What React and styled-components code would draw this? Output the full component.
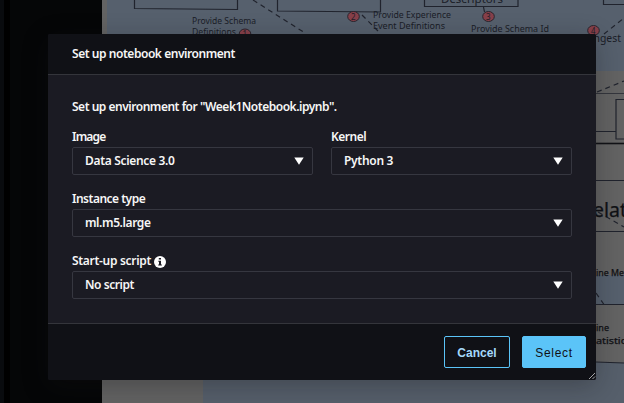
import React from "react";
import styled, { createGlobalStyle } from "styled-components";

const GlobalStyle = createGlobalStyle`
  * { box-sizing: border-box; }
  body { margin: 0; background: #050607; overflow: hidden; }
`;

const Page = styled.main`
  position: relative;
  width: 624px;
  height: 403px;
  overflow: hidden;
  font-family: "Noto Sans", sans-serif;
`;

const Sketch = styled.svg`
  display: block;
  width: 624px;
  height: 403px;
`;

const Shade = styled.div`
  position: absolute;
  left: 48px;
  top: 34px;
  width: 548px;
  height: 346px;
  box-shadow: 0 6px 24px rgba(15, 17, 20, 0.3);
`;

const Dialog = styled.section`
  position: absolute;
  left: 48px;
  top: 34px;
  width: 548px;
  height: 346px;
  display: flex;
  flex-direction: column;
  background: #1b1b23;
  border-radius: 2px;
  overflow: hidden;
  color: #f6f6f6;
`;

const Header = styled.header`
  height: 41px;
  padding: 12px 24px 0;
  background: #101116;
  border-bottom: 1px solid #34353b;
`;

const Label = styled.span`
  display: block;
  height: 16px;
  line-height: 16px;
  font-size: 12px;
  font-weight: 600;
  white-space: nowrap;
  letter-spacing: ${(p) => p.$track || 0}px;
`;

const Body = styled.div`
  flex: 1;
  padding: 24px 24px 0;
`;

const Fields = styled.div`
  display: grid;
  grid-template-columns: 241px 241px;
  column-gap: 18px;
  row-gap: 16px;
  margin-top: 14px;
`;

const Field = styled.div`
  grid-column: ${(p) => (p.$wide ? "1 / -1" : "auto")};
  height: 46px;
`;

const LabelRow = styled.div`
  display: flex;
  align-items: flex-start;
  gap: 3px;
  height: 18px;
`;

const InfoMark = styled.svg`
  margin-top: 3px;
`;

const Select = styled.div`
  display: flex;
  align-items: center;
  justify-content: space-between;
  height: 28px;
  padding: 0 8px 0 12px;
  border: 1px solid #363740;
  border-radius: 2px;
`;

const Footer = styled.footer`
  position: relative;
  display: flex;
  justify-content: flex-end;
  gap: 12px;
  height: 57px;
  padding: 12px 10px 0;
  background: #101116;
  border-top: 1px solid #34353b;
`;

const Button = styled.button`
  width: ${(p) => (p.$primary ? 64 : 66)}px;
  height: 32px;
  padding: 1px 0 0;
  border: 1px solid #5bc4f8;
  border-radius: 2px;
  background: ${(p) => (p.$primary ? "#5bc4f8" : "transparent")};
  color: ${(p) => (p.$primary ? "#101116" : "#a5d9fb")};
  font-family: "Liberation Sans", sans-serif;
  font-size: 12px;
  font-weight: ${(p) => (p.$primary ? 400 : 700)};
  letter-spacing: ${(p) => (p.$primary ? 0.7 : 0)}px;
`;

const Grip = styled.svg`
  position: absolute;
  right: 0;
  bottom: 0;
`;

const Caret = () => (
  <svg width="10" height="8" viewBox="0 0 10 8">
    <path d="M.3 .5h9.400L5 7.800z" fill="#fff" />
  </svg>
);

const InfoIcon = () => (
  <InfoMark width="12" height="12" viewBox="0 0 12 12">
    <circle cx="6" cy="6" r="6" fill="#fff" />
    <path d="M4.8 2h2.2v1.6H4.8zM4.3 4.8H7v3.6h.9v1H4.2v-1H5V5.800h-.7z" fill="#1b1b23" />
  </InfoMark>
);

const Note = ({ x, y, w, size = 8.5, children }) => (
  <text x={x} y={y} textLength={w} lengthAdjust="spacingAndGlyphs" fontSize={size}>
    {children}
  </text>
);

const Step = ({ x, y, n }) => (
  <g>
    <ellipse cx={x} cy={y} rx="5.8" ry="5" fill="#87404a" stroke="#29242d" />
    <text x={x - 2.4} y={y + 3} fontSize="8" fill="#1d1d27">{n}</text>
  </g>
);

const Backdrop = () => (
  <Sketch viewBox="0 0 624 403">
    <rect width="624" height="403" fill="#050607" />
    <rect width="4" height="403" fill="#090b0e" />
    <rect x="4" width="6" height="403" fill="#000" />
    <rect x="102" width="522" height="403" fill="#636363" />
    <rect x="107" width="517" height="71" fill="#56606d" />
    <rect x="596" y="275" width="28" height="29" fill="#56606d" />
    <path d="M203 363H596V362L624 363V403H203z" fill="#565f6b" />
    <g fill="none" stroke="#20232d" strokeWidth="1.2">
      <path d="M134.500 0V8.500L237.500 9.500V0M277.500 0V11L380.500 12V0M424.500 0V6.500H518V0M603.500 0V4.500H624M483.500 7l1 5" />
      <g strokeDasharray="5 4">
        <path d="M253 0L305 33M362 15L378 31M604 34L624 18M597 92L624 81M598 212L624 227M596 293L605 306" />
      </g>
      <path d="M596 93.500H624" strokeWidth=".7" />
      <path d="M624 99.500H616V139H624M596 131.500H616M596 180.500H624M596 231.500H624M596 304.500H624M596 362L624 363" />
      <path d="M596 143.500H624" stroke="#111216" strokeWidth="1.6" />
    </g>
    <g fill="#1a1d27">
      <Note x={192} y={24} w={64}>Provide Schema</Note>
      <Note x={192} y={34.5} w={44}>Definitions</Note>
      <Note x={373} y={18} w={78}>Provide Experience</Note>
      <Note x={373} y={28.5} w={72}>Event Definitions</Note>
      <Note x={441} y={2.5} w={62} size={11}>Descriptors</Note>
      <Note x={471} y={32} w={78}>Provide Schema Id</Note>
      <Note x={590} y={42} w={31} size={10.5}>Ingest</Note>
      <g fill="#101115" stroke="#101115" strokeWidth=".25">
        <Note x={593} y={217} w={39} size={19}>elati</Note>
        <Note x={596} y={276} w={36}>ine Meta</Note>
        <Note x={596} y={331} w={13}>ine</Note>
        <Note x={596} y={343.5} w={35}>atistics</Note>
      </g>
    </g>
    <Step x={245} y={34} n="1" />
    <Step x={353.5} y={16.5} n="2" />
    <Step x={488.5} y={16.5} n="3" />
    <Step x={593.5} y={30.5} n="4" />
  </Sketch>
);

const Choice = ({ label, value, wide, info, track, valueTrack }) => (
  <Field $wide={wide}>
    <LabelRow>
      <Label $track={track}>{label}</Label>
      {info && <InfoIcon />}
    </LabelRow>
    <Select>
      <Label $track={valueTrack}>{value}</Label>
      <Caret />
    </Select>
  </Field>
);

export default function App() {
  return (
    <Page>
      <GlobalStyle />
      <Backdrop />
      <Shade />
      <Dialog>
        <Header>
          <Label $track={-0.45}>Set up notebook environment</Label>
        </Header>
        <Body>
          <Label $track={-0.48}>Set up environment for "Week1Notebook.ipynb".</Label>
          <Fields>
            <Choice label="Image" value="Data Science 3.0" track={-0.8} valueTrack={-0.32} />
            <Choice label="Kernel" value="Python 3" track={-0.5} valueTrack={-0.3} />
            <Choice wide label="Instance type" value="ml.m5.large" track={-0.5} valueTrack={-0.4} />
            <Choice wide info label="Start-up script" value="No script" track={-0.3} valueTrack={-0.45} />
          </Fields>
        </Body>
        <Footer>
          <Button>Cancel</Button>
          <Button $primary>Select</Button>
          <Grip width="8" height="8" viewBox="0 0 8 8">
            <path d="M1 7L7 1M4.500 7L7 4.500" stroke="#b5b5b8" strokeWidth=".9" />
          </Grip>
        </Footer>
      </Dialog>
    </Page>
  );
}
